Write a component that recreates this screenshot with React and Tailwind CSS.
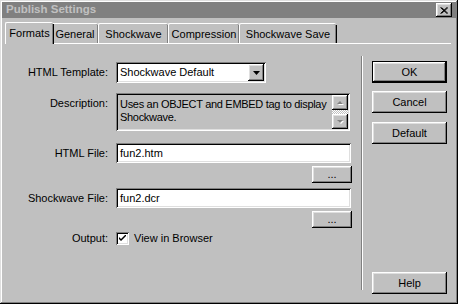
import React from 'react';

const raised =
  'shadow-[inset_-1px_-1px_#000,inset_1px_1px_#fff,inset_-2px_-2px_#808080,inset_2px_2px_#dfdfdf]';
const sunken =
  'shadow-[inset_1px_1px_#808080,inset_-1px_-1px_#fff,inset_2px_2px_#000,inset_-2px_-2px_#dfdfdf]';

function Tab({ label, width, active }) {
  return (
    <div
      className={`relative flex items-center justify-center rounded-t-[2px] border-t border-l border-white shadow-[inset_-1px_0_#808080] ${
        active ? 'h-[22px] -mx-[2px] z-10 bg-[#c0c0c0] -mb-px pb-[1px]' : 'h-[20px]'
      }`}
      style={{ width }}
    >
      <div className="absolute right-[-1px] top-[1px] bottom-0 w-px bg-black" />
      <span className={active ? 'pt-[1px]' : 'pt-[2px]'}>{label}</span>
    </div>
  );
}

function Button({ children, main, className = '' }) {
  return (
    <div
      className={`flex items-center justify-center bg-[#c0c0c0] ${
        main ? 'border border-black' : ''
      } ${className}`}
    >
      <div className={`flex h-full w-full items-center justify-center ${raised}`}>{children}</div>
    </div>
  );
}

function Row({ label, children, className = '', top }) {
  return (
    <div className={`flex ${top ? 'items-start' : 'items-center'} ${className}`}>
      <div className={`w-[103px] text-right ${top ? 'pt-[5px]' : ''}`}>{label}</div>
      <div className="ml-[8px] flex-1">{children}</div>
    </div>
  );
}

function ScrollBtn({ up }) {
  return (
    <div className={`flex h-[15px] w-[16px] items-center justify-center bg-[#c0c0c0] ${raised}`}>
      <svg width="9" height="6" viewBox="0 0 9 6">
        {up ? (
          <>
            <path d="M2 5 L5 2 L8 5 Z" fill="#fff" />
            <path d="M1 4 L4 1 L7 4 Z" fill="#808080" />
          </>
        ) : (
          <>
            <path d="M2 2 L8 2 L5 5 Z" fill="#fff" />
            <path d="M1 1 L7 1 L4 4 Z" fill="#808080" />
          </>
        )}
      </svg>
    </div>
  );
}

export default function App() {
  return (
    <div className="flex h-[304px] w-[458px] flex-col bg-[#c0c0c0] p-[2px] font-['Liberation_Sans',Arial,sans-serif] text-[11px] leading-none text-black shadow-[inset_-1px_-1px_#000,inset_1px_1px_#dfdfdf,inset_-2px_-2px_#808080,inset_2px_2px_#fff]">
      {/* Title bar */}
      <div className="flex h-[16px] items-center justify-between bg-[#808080] pl-[4px] pr-[4px]">
        <span className="text-[11.5px] font-bold text-[#c0c0c0]">Publish Settings</span>
        <div className={`flex h-[14px] w-[16px] items-center justify-center bg-[#c0c0c0] ${raised}`}>
          <svg width="8" height="7" viewBox="0 0 8 7">
            <path d="M0.5 0.5 L7 6.5 M1.5 0.5 L8 6.5 M7 0.5 L0.5 6.5 M8 0.5 L1.5 6.5" stroke="#000" strokeWidth="1" />
          </svg>
        </div>
      </div>

      {/* Tabs */}
      <div className="mt-[3px] flex h-[22px] items-end pl-[5px]">
        <Tab label="Formats" width={48} active />
        <Tab label="General" width={47} />
        <Tab label="Shockwave" width={70} />
        <Tab label="Compression" width={71} />
        <Tab label="Shockwave Save" width={97} />
      </div>

      {/* Panel */}
      <div className="ml-[3px] mr-[5px] flex flex-1 border-t border-white">
        {/* Form */}
        <div className="flex w-[356px] flex-col pt-[18px]">
          <Row label="HTML Template:">
            <div className={`flex h-[21px] w-[150px] items-center bg-white pl-[4px] pr-[2px] ${sunken}`}>
              <span className="flex-1">Shockwave Default</span>
              <div className={`flex h-[17px] w-[16px] items-center justify-center bg-[#c0c0c0] ${raised}`}>
                <svg width="7" height="4" viewBox="0 0 7 4">
                  <path d="M0 0 H7 L3.5 4 Z" fill="#000" />
                </svg>
              </div>
            </div>
          </Row>

          <Row label="Description:" top className="mt-[10px]">
            <div className={`flex h-[38px] w-[234px] bg-[#c0c0c0] p-[2px] ${sunken}`}>
              <div className="flex-1 whitespace-nowrap pl-[2px] pt-[3px] leading-[13px] tracking-[-0.3px]">
                Uses an OBJECT and EMBED tag to display
                <br />
                Shockwave.
              </div>
              <div className="flex w-[16px] flex-col justify-between bg-[repeating-conic-gradient(#fff_0_25%,#c0c0c0_0_50%)] bg-[length:2px_2px]">
                <ScrollBtn up />
                <ScrollBtn />
              </div>
            </div>
          </Row>

          <Row label="HTML File:" className="mt-[12px]">
            <div className={`flex h-[20px] w-[235px] items-center bg-white pl-[4px] ${sunken}`}>fun2.htm</div>
          </Row>
          <div className="mt-[3px] flex justify-end pr-[9px]">
            <Button className="h-[17px] w-[40px]">...</Button>
          </div>

          <Row label="Shockwave File:" className="mt-[5px]">
            <div className={`flex h-[20px] w-[235px] items-center bg-white pl-[4px] ${sunken}`}>fun2.dcr</div>
          </Row>
          <div className="mt-[3px] flex justify-end pr-[9px]">
            <Button className="h-[17px] w-[40px]">...</Button>
          </div>

          <Row label="Output:" className="mt-[4px]">
            <div className="flex items-center">
              <div className={`flex h-[13px] w-[13px] items-center justify-center bg-white ${sunken}`}>
                <svg width="7" height="7" viewBox="0 0 7 7">
                  <path d="M0 2 L0 4 L2 6 L7 1 L7 -1 L2 4 Z" fill="#000" />
                </svg>
              </div>
              <span className="ml-[5px]">View in Browser</span>
            </div>
          </Row>
        </div>

        {/* Separator */}
        <div className="my-[12px] w-[2px] border-l border-[#808080] border-r border-r-white" />

        {/* Buttons */}
        <div className="flex flex-1 flex-col pb-[8px] pl-[9px] pt-[17px]">
          <Button main className="h-[22px] w-[75px]">OK</Button>
          <Button className="mt-[8px] h-[22px] w-[75px]">Cancel</Button>
          <Button className="mt-[9px] h-[22px] w-[75px]">Default</Button>
          <Button className="mt-auto h-[22px] w-[75px]">Help</Button>
        </div>
      </div>
    </div>
  );
}
